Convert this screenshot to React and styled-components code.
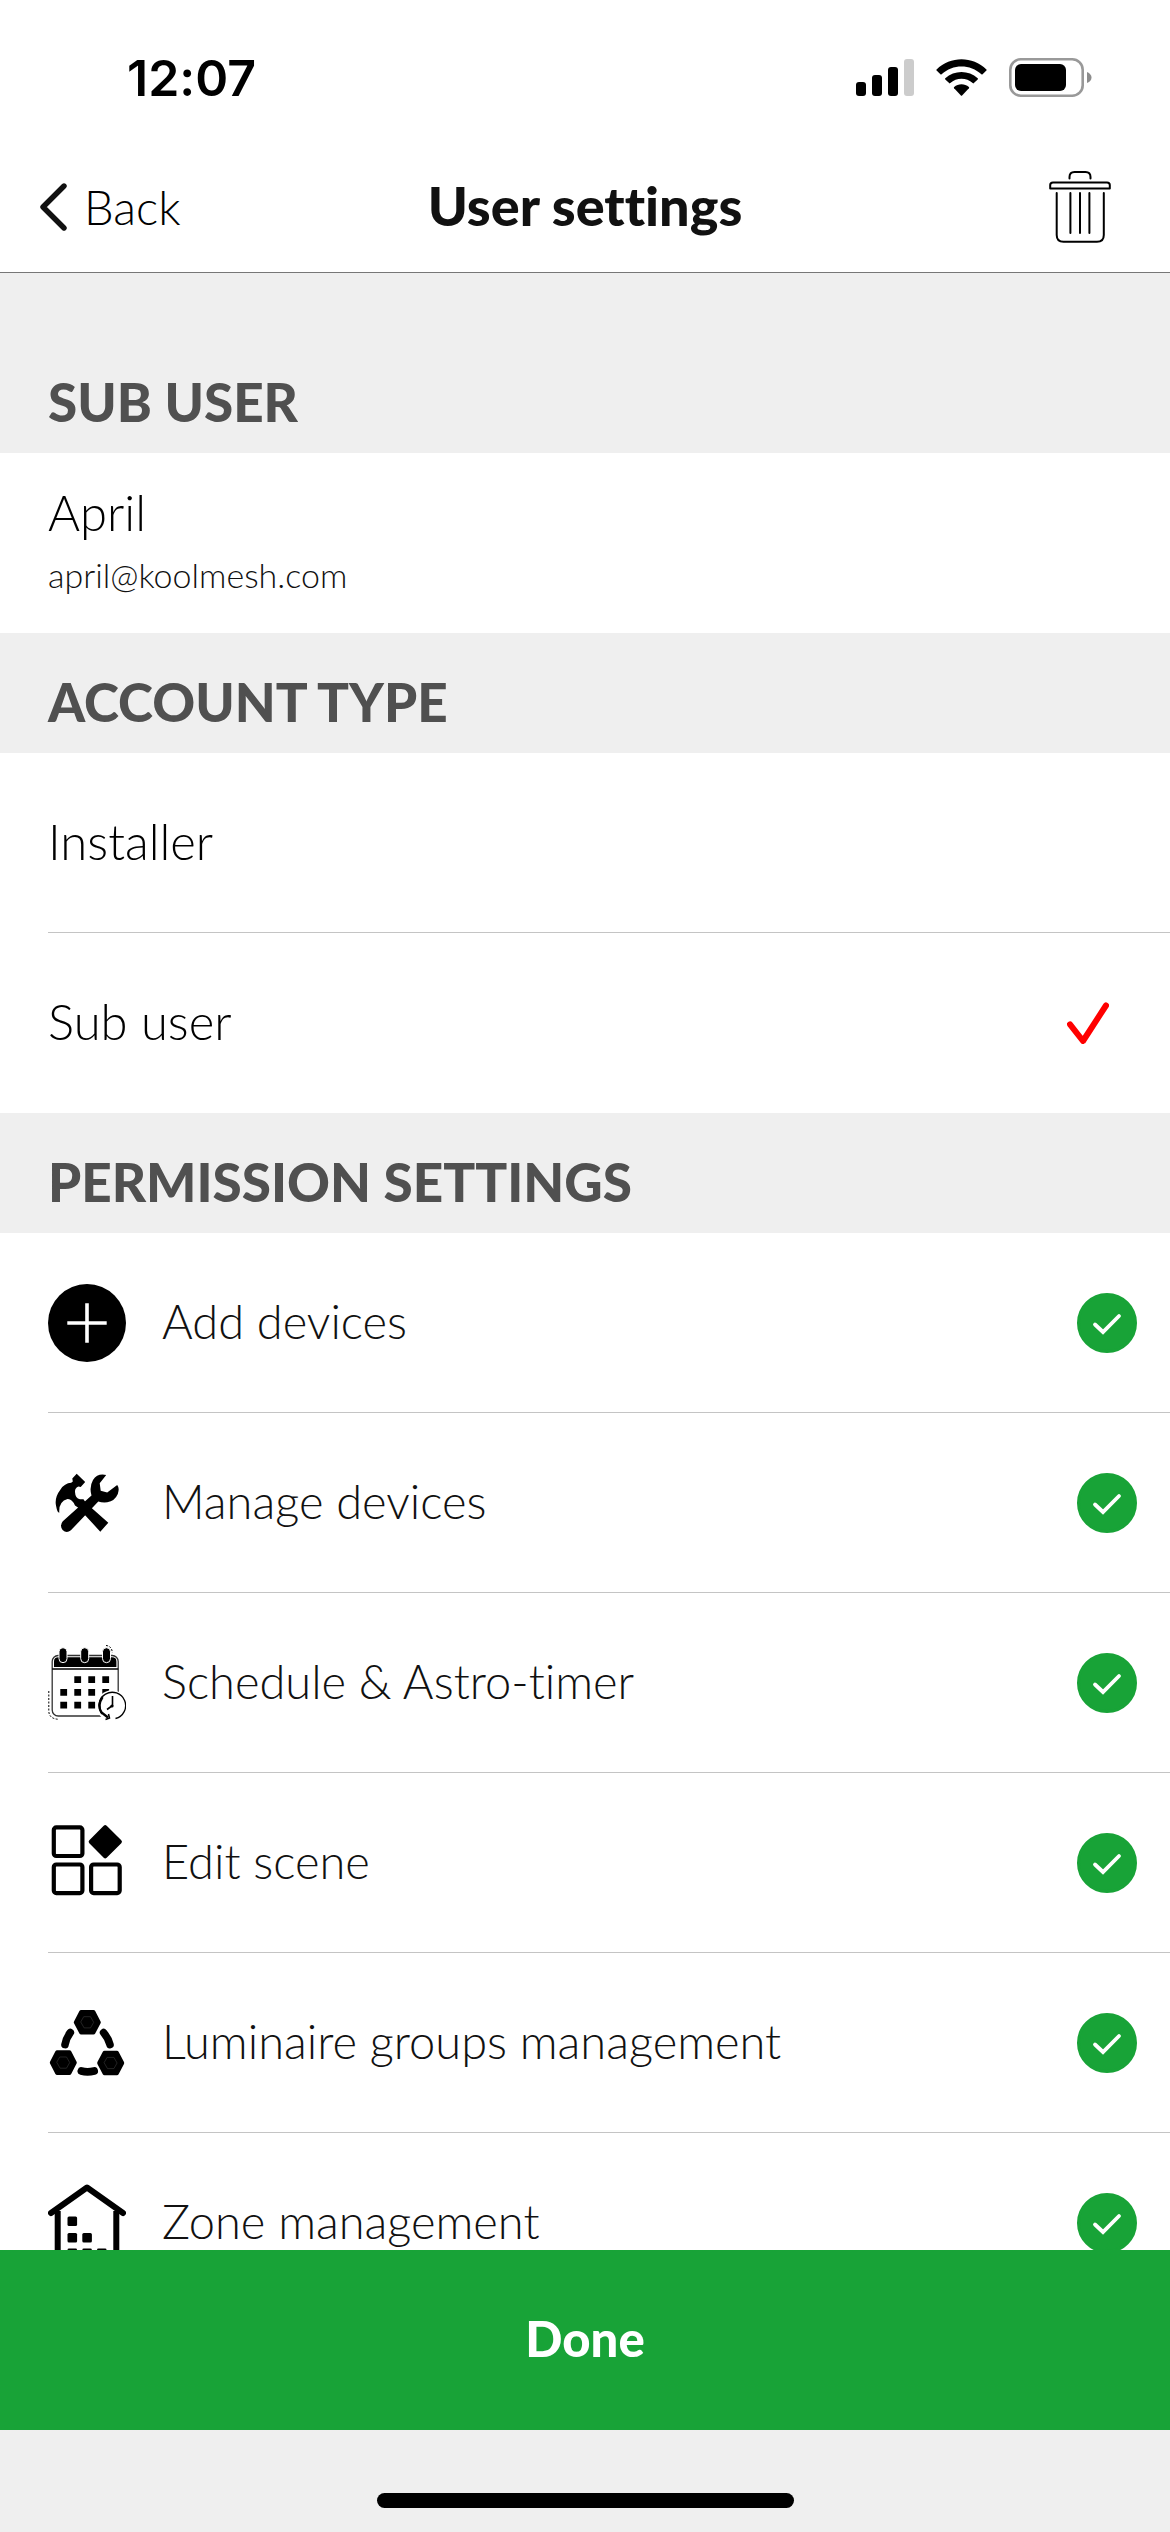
import React, {useState} from "react";
import styled, {createGlobalStyle} from "styled-components";

const GlobalStyle = createGlobalStyle`
  * {
    box-sizing: border-box;
  }
  body {
    margin: 0;
    background: #ffffff;
    font-family: Lato, "Open Sans", sans-serif;
    font-weight: 300;
    font-variant-ligatures: none;
    color: #000000;
  }
`;

const Screen = styled.div`
  display: flex;
  flex-direction: column;
  height: 100vh;
  background: #efefef;
`;

const StatusBar = styled.div`
  display: flex;
  justify-content: space-between;
  align-items: center;
  height: 141px;
  padding: 15px 78px 0 127px;
  background: #ffffff;
  flex: none;
`;

const Time = styled.span`
  font-family: Inter, sans-serif;
  font-size: 50px;
  font-weight: 600;
  line-height: 60px;
`;

const StatusIcons = styled.div`
  display: flex;
  gap: 22px;
`;

const NavBar = styled.header`
  display: grid;
  grid-template-columns: 1fr auto 1fr;
  align-items: center;
  height: 132px;
  padding: 0 39px;
  background: #ffffff;
  border-bottom: 1px solid #777777;
  flex: none;
`;

const BackButton = styled.button`
  display: flex;
  align-items: center;
  justify-self: start;
  gap: 17px;
  padding: 0;
  border: 0;
  background: none;
  font-family: inherit;
  font-size: 47px;
  font-weight: 300;
  line-height: 60px;
  color: #000000;
`;

const Title = styled.h1`
  margin: 0;
  padding-bottom: 2px;
  font-size: 54px;
  font-weight: 900;
  line-height: 60px;
  color: #111111;
`;

const TrashButton = styled.button`
  display: flex;
  justify-self: end;
  padding: 0 20px 0 0;
  border: 0;
  background: none;
`;

const Content = styled.main`
  flex: 1;
  min-height: 0;
  overflow-y: auto;
  padding-top: 60px;
  scrollbar-width: none;
`;

const SectionTitle = styled.h2`
  display: flex;
  align-items: center;
  height: 120px;
  margin: 0;
  padding: 18px 48px 0;
  font-size: 53px;
  font-weight: 900;
  line-height: 60px;
  color: #505050;
`;

const List = styled.div`
  background: #ffffff;
  padding-left: 48px;
`;

const UserCard = styled.div`
  display: flex;
  flex-direction: column;
  justify-content: center;
  height: 180px;
  padding: 0 48px 9px;
  background: #ffffff;
`;

const UserName = styled.span`
  font-size: 49px;
  line-height: 72px;
`;

const UserEmail = styled.span`
  font-size: 34px;
  line-height: 54px;
  color: #111111;
`;

const Row = styled.label`
  display: flex;
  align-items: center;
  gap: 36px;
  height: 180px;
  padding-right: ${props => props.$end};
  border-bottom: 1px solid #c4c4c4;

  &:last-child {
    border-bottom-color: transparent;
  }
`;

const RowText = styled.span`
  flex: 1;
  padding-bottom: 4px;
  font-size: ${props => props.$size};
  line-height: 60px;
  color: ${props => props.$color};
`;

const Mark = styled.span`
  display: grid;
  place-items: center;

  > * {
    grid-area: 1 / 1;
  }

  svg {
    pointer-events: none;
  }

  input:not(:checked) + svg {
    visibility: hidden;
  }
`;

const Radio = styled.input`
  appearance: none;
  width: 42px;
  height: 42px;
  margin: 0;
`;

const Checkbox = styled.input`
  appearance: none;
  width: 60px;
  height: 60px;
  margin: 0;
  border: 3px solid #18a337;
  border-radius: 50%;

  &:checked {
    background: #18a337;
  }
`;

const DoneButton = styled.button`
  flex: none;
  height: 180px;
  padding: 0 0 4px;
  border: 0;
  background: #18a337;
  font-family: inherit;
  font-size: 49px;
  font-weight: 900;
  line-height: 60px;
  color: #ffffff;
`;

const HomeArea = styled.div`
  display: flex;
  justify-content: center;
  align-items: flex-end;
  flex: none;
  height: 102px;
  padding-bottom: 24px;
`;

const HomeIndicator = styled.div`
  width: 417px;
  height: 15px;
  border-radius: 8px;
  background: #000000;
`;

const SignalIcon = () => (
  <svg width="58" height="40" viewBox="0 0 58 40">
    <rect x="0" y="24" width="10" height="14" rx="3" />
    <rect x="16" y="17" width="10" height="21" rx="3" />
    <rect x="32" y="9" width="10" height="29" rx="3" />
    <rect x="48" y="1" width="10" height="37" rx="3" fill="#cccccc" />
  </svg>
);

const WifiIcon = () => (
  <svg width="51" height="40" viewBox="0 0 51 40">
    <path d="M0.6 11.4 C14.5 -2.3 36.5 -2.3 50.4 11.4 Q51 12 50.4 12.6 L46.6 16.3 Q46 16.8 45.4 16.3 C34.3 5.8 16.7 5.8 5.6 16.3 Q5 16.8 4.4 16.3 L0.6 12.6 Q0 12 0.6 11.4 Z" />
    <path d="M9.3 20.3 C18.3 11.8 32.7 11.8 41.7 20.3 Q42.3 20.9 41.7 21.5 L37.9 25.1 Q37.3 25.7 36.7 25.1 C30.5 19.4 20.5 19.4 14.3 25.1 Q13.7 25.7 13.1 25.1 L9.3 21.5 Q8.7 20.9 9.3 20.3 Z" />
    <path d="M18.1 29 C22.3 25.3 28.7 25.3 32.9 29 Q33.5 29.6 32.9 30.3 L26.1 37.4 Q25.5 38 24.9 37.4 L18.1 30.3 Q17.5 29.6 18.1 29 Z" />
  </svg>
);

const BatteryIcon = () => (
  <svg width="83" height="40" viewBox="0 0 83 40">
    <rect x="1.3" y="1.3" width="72.4" height="36.4" rx="10.5" fill="none" stroke="#999999" strokeWidth="2.6" />
    <rect x="6" y="6" width="51" height="27" rx="6" />
    <path d="M78 14 Q82.5 16 82.5 19.5 Q82.5 23 78 25 Z" fill="#8c8c8c" />
  </svg>
);

const ChevronIcon = () => (
  <svg width="28" height="48" viewBox="0 0 28 48" fill="none" stroke="#111111" strokeWidth="5.4" strokeLinecap="round" strokeLinejoin="round">
    <path d="M25 3 L4 24 L25 45" />
  </svg>
);

const TrashIcon = () => (
  <svg width="62" height="72" viewBox="0 0 62 72" fill="none" stroke="#000000" strokeWidth="2" strokeLinecap="round" strokeLinejoin="round">
    <path d="M20.5 7.5 V6 Q20.5 1 25.5 1 H36.5 Q41.5 1 41.5 6 V7.5" />
    <path d="M4 11.4 H58 Q60.8 11.4 60.8 14 V17.6 H1.2 V14 Q1.2 11.4 4 11.4 Z" />
    <path d="M7.7 22 V64 Q7.7 70.8 14.5 70.8 H48 Q54.8 70.8 54.8 64 V22" />
    <path d="M21.4 22 V62 M31 22 V62 M40.4 22 V62" />
  </svg>
);

const RedTick = () => (
  <svg width="42" height="42" viewBox="0 0 42 42" fill="none" stroke="#ff0000" strokeWidth="6" strokeLinecap="round" strokeLinejoin="round">
    <path d="M3 22.3 L16 39 L39 3.5" />
  </svg>
);

const WhiteTick = () => (
  <svg width="60" height="60" viewBox="0 0 60 60" fill="none" stroke="#ffffff" strokeWidth="3.8" strokeLinecap="round">
    <path d="M18 31.5 L26 39 L42 23" />
  </svg>
);

const AddIcon = () => (
  <svg width="78" height="78" viewBox="0 0 78 78">
    <circle cx="39" cy="39" r="39" />
    <path d="M19.3 39 H58.7 M39 19.3 V58.7" stroke="#ffffff" strokeWidth="3.6" />
  </svg>
);

const ToolsIcon = () => (
  <svg width="78" height="78" viewBox="0 0 78 78">
    <path d="M28.7 9.7 L37.2 17.9 L32.7 23 L30.5 22.5 Q26.7 24 27 28 Q27.3 34.5 32 35.3 L35.5 35.2 L38 39 L60.3 58.7 L52.3 67.7 L30 43.5 L27 41.5 Q24 34.6 19.5 35 Q10.5 37.5 11.3 48.7 Q9.3 48.8 8.2 42.5 Q6 34 12.5 25.5 Q16.5 19.2 23.2 18.8 L24.8 17.5 L24.3 14.5 Z" />
    <path d="M58.2 11 L51.7 19.3 L52.7 26.8 L59.2 28.4 L69.2 21 Q71.8 24 69.8 30 Q66.8 37 59.3 38.3 Q54 38.8 50.3 37.5 L22.9 66.3 Q18.5 69.8 14.6 66 Q11.3 61.5 14.8 57.3 L43.5 31.5 Q41 23 45 16 Q49.5 9 58.2 11 Z" />
  </svg>
);

const CalendarIcon = () => (
  <svg width="78" height="78" viewBox="0 0 78 78" fill="none" stroke="#000000">
    <path d="M0.8 47 V67 Q1 75 11 75.3 M58 1.5 Q64 2 64.3 9" strokeWidth="1" strokeDasharray="2 1.5" />
    <rect x="4.2" y="11.5" width="66" height="60.5" rx="6" stroke="#333333" strokeWidth="1.3" />
    <path d="M6 23 V17.5 Q6 13.3 10.5 13.3 H64 Q68.4 13.3 68.4 17.5 V23 Z" fill="#000000" stroke="none" />
    <path d="M4.2 25 H70.2" strokeWidth="1.4" />
    {[15, 36.7, 58.5].map(x => (
      <rect key={x} x={x - 4} y="3.7" width="8" height="15" rx="4" fill="#000000" stroke="#ffffff" strokeWidth="1" />
    ))}
    <path
      d="M26.3 32.3h6.8v6.8h-6.8z M40.3 32.3h6.8v6.8h-6.8z M54.3 32.3h6.8v6.8h-6.8z M12.3 45h6.8v6.8h-6.8z M26.3 45h6.8v6.8h-6.8z M40.3 45h6.8v6.8h-6.8z M54.3 45h6.8v6.8h-6.8z M12.3 57.7h6.8v6.8h-6.8z M26.3 57.7h6.8v6.8h-6.8z M40.3 57.7h6.8v6.8h-6.8z"
      fill="#000000"
      stroke="none"
    />
    <circle cx="64" cy="61.7" r="15.5" fill="#ffffff" stroke="none" />
    <path d="M67.5 74.5 A13.3 13.3 0 1 0 54 70" strokeWidth="1.3" />
    <path d="M54.5 53 Q49 61.5 53.5 68.5 L60 73.5" strokeWidth="2.4" />
    <path d="M57.5 75.5 L61.5 74 L60.5 70" strokeWidth="1.5" />
    <path d="M64.5 52 V61.5 L59 65.5" strokeWidth="1.6" />
    <circle cx="64" cy="62" r="1.6" fill="#000000" stroke="none" />
  </svg>
);

const SceneIcon = () => (
  <svg width="78" height="78" viewBox="0 0 78 78" fill="none" stroke="#000000" strokeWidth="4.2">
    <rect x="5.8" y="3.4" width="28.6" height="28.6" rx="2.5" />
    <rect x="5.8" y="40.5" width="28.6" height="28.6" rx="2.5" />
    <rect x="43.1" y="40.5" width="28.6" height="28.6" rx="2.5" />
    <path d="M57.2 3.2 L71.8 17.7 L57.2 32.2 L42.8 17.7 Z" fill="#000000" strokeLinejoin="round" />
  </svg>
);

const hexes = [[39.3, 18.3], [15.3, 58.6], [62.7, 59]];

const GroupsIcon = () => (
  <svg width="78" height="78" viewBox="0 0 78 78" fill="none" strokeLinejoin="round" strokeLinecap="round">
    {hexes.map(([x, y]) => (
      <g key={x} transform={`translate(${x} ${y})`}>
        <path d="M-6.2 -10.4 H6.2 L11.6 0 L6.2 10.4 H-6.2 L-11.6 0 Z" fill="#000000" stroke="#000000" strokeWidth="3.8" />
        <path d="M-3.2 -5.6 H3.2 L6.4 0 L3.2 5.6 H-3.2 L-6.4 0 Z" stroke="#3a3a3a" strokeWidth="0.6" />
      </g>
    ))}
    <path d="M22.3 28.6 Q18 34.5 17 40.6 M55.6 28.6 Q60.5 34.5 62 40.6 M33.3 67 Q39.3 68.8 46.2 67" stroke="#000000" strokeWidth="7.6" />
  </svg>
);

const HouseIcon = () => (
  <svg width="78" height="78" viewBox="0 0 78 78">
    <path d="M3 29 L39 3.5 L75 29" fill="none" stroke="#000000" strokeWidth="6" strokeLinecap="round" strokeLinejoin="round" />
    <path d="M9.7 27 V75 H68.3 V27" fill="none" stroke="#000000" strokeWidth="6" />
    <rect x="19.5" y="32.5" width="9.6" height="9.6" rx="1.5" />
    <rect x="19.5" y="49" width="9.6" height="9.6" rx="1.5" />
    <rect x="34.3" y="49" width="9.6" height="9.6" rx="1.5" />
    <rect x="19.5" y="64.6" width="9.6" height="9.6" rx="1.5" />
    <rect x="34.3" y="64.6" width="9.6" height="9.6" rx="1.5" />
    <rect x="49" y="64.6" width="9.6" height="9.6" rx="1.5" />
  </svg>
);

const accountTypes = ["Installer", "Sub user"];

const permissions = [
  {text: "Add devices", Icon: AddIcon},
  {text: "Manage devices", Icon: ToolsIcon},
  {text: "Schedule & Astro-timer", Icon: CalendarIcon},
  {text: "Edit scene", Icon: SceneIcon},
  {text: "Luminaire groups management", Icon: GroupsIcon},
  {text: "Zone management", Icon: HouseIcon},
];

export default function App() {
  const [accountType, setAccountType] = useState("Sub user");

  return (
    <Screen>
      <GlobalStyle />
      <StatusBar>
        <Time>12:07</Time>
        <StatusIcons>
          <SignalIcon />
          <WifiIcon />
          <BatteryIcon />
        </StatusIcons>
      </StatusBar>

      <NavBar>
        <BackButton type="button"><ChevronIcon />Back</BackButton>
        <Title>User settings</Title>
        <TrashButton type="button" aria-label="Delete user"><TrashIcon /></TrashButton>
      </NavBar>

      <Content>
        <SectionTitle>SUB USER</SectionTitle>
        <UserCard>
          <UserName>April</UserName>
          <UserEmail>april@koolmesh.com</UserEmail>
        </UserCard>

        <SectionTitle>ACCOUNT TYPE</SectionTitle>
        <List>
          {accountTypes.map(type => (
            <Row key={type} $end="61px">
              <RowText $size="49px" $color="#000000">{type}</RowText>
              <Mark>
                <Radio type="radio" name="accountType" checked={accountType === type} onChange={() => setAccountType(type)} />
                <RedTick />
              </Mark>
            </Row>
          ))}
        </List>

        <SectionTitle>PERMISSION SETTINGS</SectionTitle>
        <List>
          {permissions.map(({text, Icon}) => (
            <Row key={text} $end="33px">
              <Icon />
              <RowText $size="47px" $color="#111111">{text}</RowText>
              <Mark>
                <Checkbox type="checkbox" defaultChecked />
                <WhiteTick />
              </Mark>
            </Row>
          ))}
        </List>
      </Content>

      <DoneButton type="button">Done</DoneButton>
      <HomeArea>
        <HomeIndicator />
      </HomeArea>
    </Screen>
  );
}
